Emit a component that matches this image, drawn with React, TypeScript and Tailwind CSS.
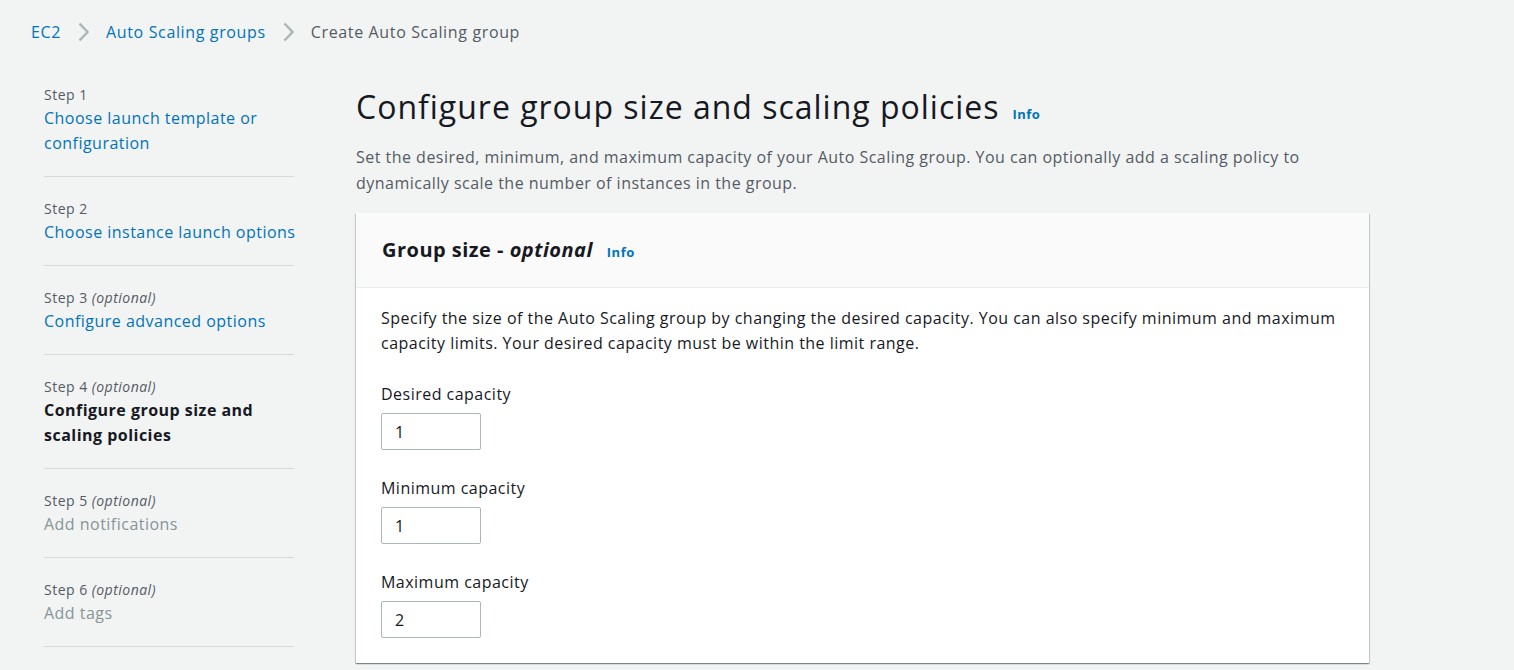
const steps = [
  { n: 1, optional: false, title: ['Choose launch template or', 'configuration'], state: 'link' },
  { n: 2, optional: false, title: ['Choose instance launch options'], state: 'link' },
  { n: 3, optional: true, title: ['Configure advanced options'], state: 'link' },
  { n: 4, optional: true, title: ['Configure group size and', 'scaling policies'], state: 'current' },
  { n: 5, optional: true, title: ['Add notifications'], state: 'disabled' },
  { n: 6, optional: true, title: ['Add tags'], state: 'disabled' },
]

const fields = [
  { label: 'Desired capacity', value: '1' },
  { label: 'Minimum capacity', value: '1' },
  { label: 'Maximum capacity', value: '2' },
]

function Chevron() {
  return (
    <svg className="mx-[17px] shrink-0" width="11" height="20" viewBox="0 0 11 20" fill="none">
      <polyline points="1.5,1.5 9.5,10 1.5,18.5" stroke="#aab7b8" strokeWidth="2.4" />
    </svg>
  )
}

export default function App() {
  return (
    <div className="min-h-screen bg-[#f2f3f3] text-[#16191f] font-['Open_Sans',sans-serif] tracking-[0.03em]">
      {/* Breadcrumbs */}
      <nav className="flex items-center h-[64px] pl-[31px] text-[16px] tracking-[0.04em]">
        <a className="text-[#0073bb]">EC2</a>
        <Chevron />
        <a className="text-[#0073bb]">Auto Scaling groups</a>
        <Chevron />
        <span className="text-[#545b64]">Create Auto Scaling group</span>
      </nav>

      <div className="flex pt-[20px]">
        {/* Wizard steps */}
        <aside className="w-[250px] ml-[44px] shrink-0">
          {steps.map((s, i) => (
            <div key={s.n} className={`border-b border-[#d5dbdb] pb-[20px] ${i > 0 ? 'pt-[21px]' : ''}`}>
              <div className="h-[22px] text-[14px] leading-[22px] text-[#545b64]">
                Step {s.n} {s.optional && <i>(optional)</i>}
              </div>
              <div
                className={`text-[16px] leading-[25px] ${
                  s.state === 'current'
                    ? 'font-bold text-[#16191f]'
                    : s.state === 'disabled'
                    ? 'text-[#879596]'
                    : 'text-[#0073bb]'
                }`}
              >
                {s.title.map((t) => (
                  <div key={t} className="h-[25px] whitespace-nowrap">{t}</div>
                ))}
              </div>
            </div>
          ))}
        </aside>

        {/* Main content */}
        <main className="ml-[62px] w-[1013px]">
          <div className="flex items-baseline pt-[3px]">
            <h1 className="text-[32px] leading-[40px] font-normal tracking-[0.031em] text-[#16191f]">
              Configure group size and scaling policies
            </h1>
            <a className="ml-[13px] text-[13px] font-bold text-[#0073bb]">Info</a>
          </div>
          <p className="mt-[17px] max-w-[985px] text-[16px] leading-[26px] text-[#545b64]">
            Set the desired, minimum, and maximum capacity of your Auto Scaling group. You can optionally add a scaling policy to
            dynamically scale the number of instances in the group.
          </p>

          <section className="mt-[17px] bg-white shadow-[0_1px_1px_0_rgba(0,28,36,0.3),1px_1px_1px_0_rgba(0,28,36,0.15),-1px_1px_1px_0_rgba(0,28,36,0.15)]">
            <div className="flex items-baseline h-[75px] pt-[22px] px-[26px] bg-[#fafafa] border-b border-[#eaeded]">
              <h2 className="text-[20px] leading-[30px] font-bold">
                Group size - <i>optional</i>
              </h2>
              <a className="ml-[14px] text-[13px] font-bold text-[#0073bb]">Info</a>
            </div>
            <div className="px-[25px] pt-[18px] pb-[25px]">
              <p className="text-[16px] leading-[25px] max-w-[962px]">
                Specify the size of the Auto Scaling group by changing the desired capacity. You can also specify minimum and maximum
                capacity limits. Your desired capacity must be within the limit range.
              </p>
              {fields.map((f) => (
                <div key={f.label} className="mt-[27px]">
                  <label className="block text-[16px] leading-[22px]">{f.label}</label>
                  <div className="mt-[8px] flex items-center h-[37px] w-[100px] rounded-[2px] border border-[#aab7b8] pl-[13px] text-[16px]">
                    {f.value}
                  </div>
                </div>
              ))}
            </div>
          </section>
        </main>
      </div>
    </div>
  )
}
